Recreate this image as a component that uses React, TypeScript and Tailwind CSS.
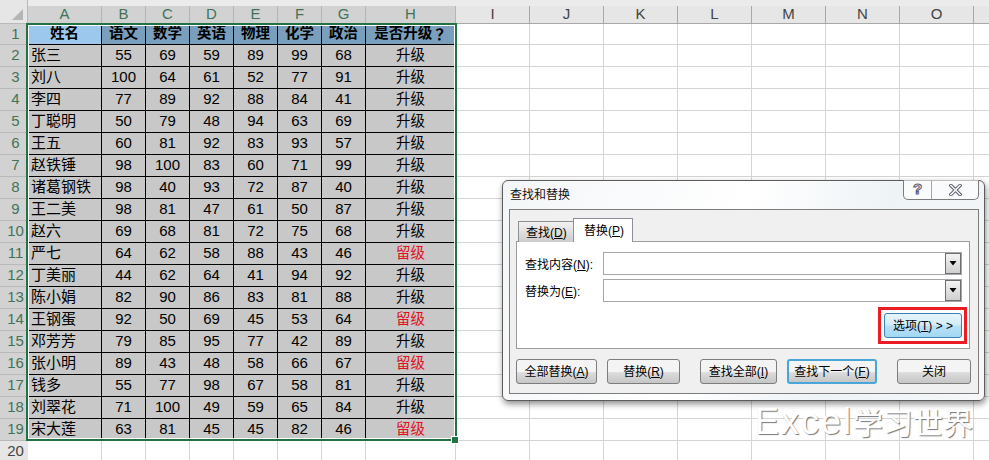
const columns = ["A", "B", "C", "D", "E", "F", "G", "H", "I", "J", "K", "L", "M", "N", "O", ""];

const subjects = ["语文", "数学", "英语", "物理", "化学", "政治"];

const students: [string, number[], string][] = [
  ["张三", [55, 69, 59, 89, 99, 68], "升级"],
  ["刘八", [100, 64, 61, 52, 77, 91], "升级"],
  ["李四", [77, 89, 92, 88, 84, 41], "升级"],
  ["丁聪明", [50, 79, 48, 94, 63, 69], "升级"],
  ["王五", [60, 81, 92, 83, 93, 57], "升级"],
  ["赵铁锤", [98, 100, 83, 60, 71, 99], "升级"],
  ["诸葛钢铁", [98, 40, 93, 72, 87, 40], "升级"],
  ["王二美", [98, 81, 47, 61, 50, 87], "升级"],
  ["赵六", [69, 68, 81, 72, 75, 68], "升级"],
  ["严七", [64, 62, 58, 88, 43, 46], "留级"],
  ["丁美丽", [44, 62, 64, 41, 94, 92], "升级"],
  ["陈小娟", [82, 90, 86, 83, 81, 88], "升级"],
  ["王钢蛋", [92, 50, 69, 45, 53, 64], "留级"],
  ["邓芳芳", [79, 85, 95, 77, 42, 89], "升级"],
  ["张小明", [89, 43, 48, 58, 66, 67], "留级"],
  ["钱多", [55, 77, 98, 67, 58, 81], "升级"],
  ["刘翠花", [71, 100, 49, 59, 65, 84], "升级"],
  ["宋大莲", [63, 81, 45, 45, 82, 46], "留级"],
];

const dataCell = "flex items-center justify-center bg-[#c8c8c8] border-r border-b border-black";
const headCell = "flex items-center justify-center font-bold text-[14.5px] text-black border-r border-b border-black";
const emptyCell = "border-r border-b border-[#d4d4d4]";

function RowHeader({ n, active }: { n: number; active: boolean }) {
  return (
    <div
      className={
        active
          ? "flex items-center justify-center pl-[3px] text-[15px] text-[#3f7458] bg-[#d2d2d2] border-b border-[#b9b9b9]"
          : "flex items-center justify-center pl-[3px] text-[15px] text-[#444444] bg-[#e6e6e6] border-b border-[#b9b9b9]"
      }
    >
      {n}
    </div>
  );
}

function EmptyCells({ count }: { count: number }) {
  return (
    <>
      {Array.from({ length: count }).map((_, i) => (
        <div key={i} className={emptyCell} />
      ))}
    </>
  );
}

function Sheet() {
  return (
    <div className="grid grid-cols-[28px_74px_repeat(6,44px)_90px_repeat(7,74px)_16px] grid-rows-[24px_21px_repeat(19,22px)] bg-white">
      <div className="flex items-end justify-end pr-[3px] pb-[3px] bg-[#e6e6e6] border-b border-r border-[#b9b9b9]">
        <svg width="12" height="12" viewBox="0 0 12 12">
          <path d="M0 12 L11 1 L11 12 Z" fill="#b5b5b5" />
        </svg>
      </div>
      {columns.map((c, i) => (
        <div key={i} className="bg-[#ebebeb] pt-[6px]">
          <div
            className={
              i < 8
                ? "h-[18px] flex items-center justify-center text-[15px] text-[#3f7458] bg-[#d2d2d2] border-r border-b border-[#b4b4b4]"
                : "h-[18px] flex items-center justify-center text-[15px] text-[#444444] bg-[#e6e6e6] border-r border-b border-[#a8a8a8]"
            }
          >
            {c}
          </div>
        </div>
      ))}

      <RowHeader n={1} active />
      <div className={`${headCell} bg-[#9bc8ec]`}>姓名</div>
      {subjects.map((s) => (
        <div key={s} className={`${headCell} bg-[#7a9fbd]`}>
          {s}
        </div>
      ))}
      <div className={`${headCell} bg-[#7a9fbd]`}>
        是否升级<span className="font-['Noto_Sans_CJK_TC',sans-serif]">？</span>
      </div>
      <EmptyCells count={8} />

      {students.map(([name, scores, result], i) => (
        <div key={name} className="contents">
          <RowHeader n={i + 2} active />
          <div className="flex items-center pl-[3px] text-[15px] text-black bg-[#c8c8c8] border-r border-b border-black whitespace-nowrap">
            {name}
          </div>
          {scores.map((v, j) => (
            <div key={j} className={`${dataCell} text-[15px] text-black`}>
              {v}
            </div>
          ))}
          <div className={result === "留级" ? `${dataCell} text-[14.5px] text-[#e0101c]` : `${dataCell} text-[14.5px] text-black`}>
            {result}
          </div>
          <EmptyCells count={8} />
        </div>
      ))}

      <RowHeader n={20} active={false} />
      <EmptyCells count={16} />
    </div>
  );
}

function Dropdown() {
  return (
    <div className="h-full w-[16px] flex items-center justify-center border border-[#6e6e6e] bg-gradient-to-b from-[#f4f4f4] to-[#cfcfcf]">
      <svg width="8" height="5" viewBox="0 0 8 5">
        <path d="M0.5 0 H7.5 L4 4.5 Z" fill="#000" />
      </svg>
    </div>
  );
}

function Field({ label, hotkey }: { label: string; hotkey: string }) {
  return (
    <div className="flex items-center h-[23px]">
      <div className="w-[78px] pt-[2px] text-[12px] text-black whitespace-nowrap">
        {label}(<u>{hotkey}</u>):
      </div>
      <div className="flex flex-1 h-full justify-end bg-white border border-[#a6a6ad]">
        <Dropdown />
      </div>
    </div>
  );
}

function DialogButton({ label, hotkey, width, primary }: { label: string; hotkey?: string; width: string; primary?: boolean }) {
  return (
    <div
      className={
        primary
          ? `${width} h-[25px] flex items-center justify-center pt-[1px] rounded-[3px] border-2 border-[#4aa6d8] bg-[linear-gradient(#f4f4f4_50%,#dcdcdc_55%,#c6c6c6)] text-[12px] text-black`
          : `${width} h-[25px] flex items-center justify-center pt-[1px] rounded-[3px] border border-[#7d7d7d] bg-[linear-gradient(#f4f4f4_50%,#dcdcdc_55%,#c6c6c6)] text-[12px] text-black`
      }
    >
      {hotkey ? (
        <span>
          {label}(<u>{hotkey}</u>)
        </span>
      ) : (
        <span>{label}</span>
      )}
    </div>
  );
}

function Dialog() {
  return (
    <div className="absolute left-[502px] top-[180px] w-[483px] h-[221px] rounded-[6px] border border-[#5c5c5c] bg-[linear-gradient(110deg,#f3f6f8,#ffffff_45%,#eef3f6_70%,#f6f8f9)] shadow-[1px_3px_6px_rgba(0,0,0,0.45)]">
      <div className="h-[28px] pl-[7px] pt-[4px] text-[12px] leading-[20px] text-[#111]">查找和替换</div>
      <div className="absolute right-[5px] top-[-1px] flex h-[20px] w-[76px] rounded-b-[5px] border border-t-0 border-[#7b7b7b] bg-white/60">
        <div className="w-[28px] flex items-center justify-center border-r border-[#a8a8a8] text-[15px] font-bold text-white [-webkit-text-stroke:1px_#5b5570]">
          ?
        </div>
        <div className="flex-1 flex items-center justify-center">
          <svg width="13" height="12" viewBox="0 0 13 12">
            <path d="M2 1.5 L11 10.5 M11 1.5 L2 10.5" stroke="#55556a" strokeWidth="3.4" strokeLinecap="square" />
            <path d="M2 1.5 L11 10.5 M11 1.5 L2 10.5" stroke="#f6f6f6" strokeWidth="1.6" strokeLinecap="square" />
          </svg>
        </div>
      </div>

      <div className="ml-[6px] w-[470px] h-[185px] border border-[#7c7c7c] bg-[#f0f0f0] pl-[6px] pt-[8px]">
        <div className="relative z-10 flex items-end h-[24px] ml-[2px] -mb-px">
          <div className="w-[55px] h-[21px] flex items-center pl-[7px] pt-[1px] text-[12px] text-black border border-r-0 border-b-0 border-[#8e8f8f] bg-gradient-to-b from-[#f2f2f2] to-[#cdcdcd]">
            <span>
              查找(<u>D</u>)
            </span>
          </div>
          <div className="w-[60px] h-[24px] flex items-center pl-[10px] pt-[1px] text-[12px] text-black border border-b-0 border-[#8e8f9c] bg-white">
            <span>
              替换(<u>P</u>)
            </span>
          </div>
        </div>

        <div className="w-[454px] h-[108px] border border-[#9c9c9c] bg-white pl-[8px] pr-[7px] pt-[10px]">
          <div className="flex flex-col gap-[4px]">
            <Field label="查找内容" hotkey="N" />
            <Field label="替换为" hotkey="E" />
          </div>
          <div className="flex justify-end mt-[11px]">
            <div className="relative w-[78px] h-[25px] flex items-center justify-center pt-[1px] rounded-[3px] border border-[#3c7fb1] bg-[linear-gradient(#e6f5fc,#d4edfa_45%,#b6e0f6_55%,#a4d8f4)] text-[12px] text-black">
              <span className="whitespace-pre">
                选项(<u>T</u>) &gt; &gt;
              </span>
              <div className="absolute -left-[7px] -top-[7px] -right-[6px] -bottom-[7px] border-[3px] border-[#ec1c24]" />
            </div>
          </div>
        </div>

        <div className="flex mt-[10px]">
          <DialogButton label="全部替换" hotkey="A" width="w-[81px]" />
          <div className="w-[10px]" />
          <DialogButton label="替换" hotkey="R" width="w-[73px]" />
          <div className="w-[20px]" />
          <DialogButton label="查找全部" hotkey="I" width="w-[77px]" />
          <div className="w-[10px]" />
          <DialogButton label="查找下一个" hotkey="F" width="w-[90px]" primary />
          <div className="w-[20px]" />
          <DialogButton label="关闭" width="w-[74px]" />
        </div>
      </div>
    </div>
  );
}

export default function App() {
  return (
    <div lang="zh-CN" className="relative w-[989px] h-[460px] overflow-hidden bg-white font-['Liberation_Sans','Noto_Sans_CJK_SC',sans-serif]">
      <Sheet />

      {/* selection box round A1:H19 */}
      <div className="absolute left-[26px] top-[23px] w-[431px] h-[418px] border-2 border-[#217346] shadow-[inset_0_0_0_1px_#ffffff]" />
      <div className="absolute left-[452px] top-[437px] w-[6px] h-[6px] bg-[#217346] outline outline-1 outline-white" />

      <Dialog />

      <div className="absolute left-[755px] top-[402px] flex items-baseline whitespace-nowrap text-white [text-shadow:1px_1px_1px_#777777]">
        <span className="text-[36px] leading-[40px] tracking-[2px]">Excel</span>
        <span className="text-[30px] leading-[40px]">学习世界</span>
      </div>
    </div>
  );
}
